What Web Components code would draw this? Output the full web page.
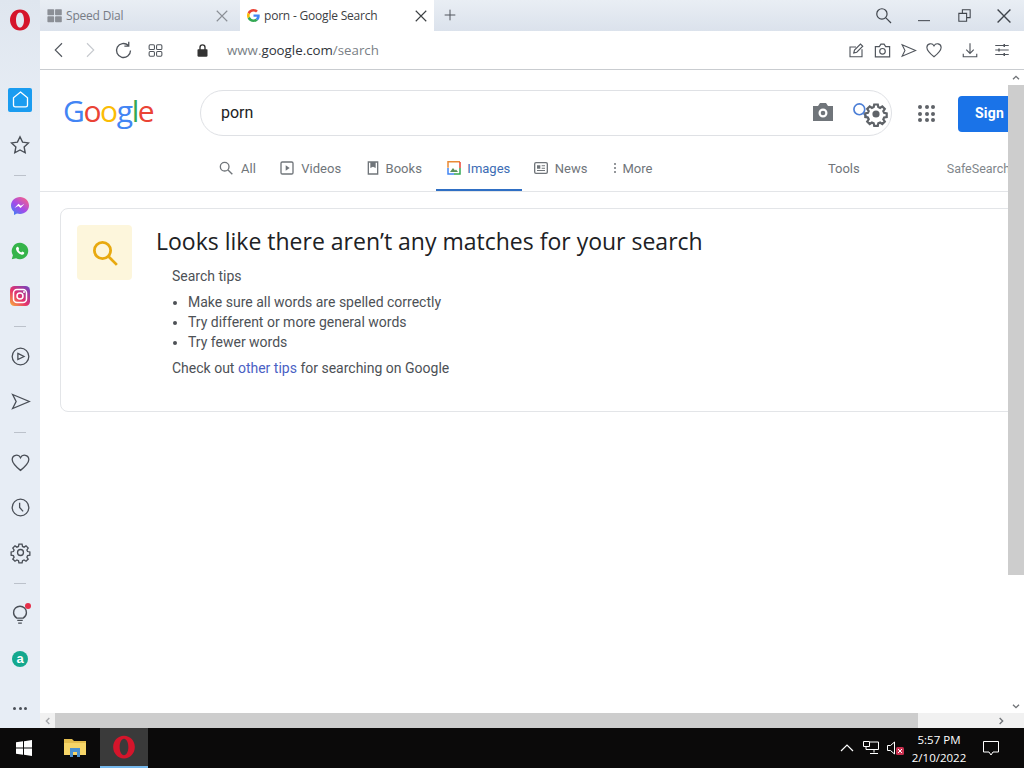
<!DOCTYPE html>
<html>
<head>
<meta charset="utf-8">
<title>porn - Google Search</title>
<style>
  html, body { margin: 0; height: 100%; overflow: hidden; background: #fff; }
  body { font-family: "Roboto", "Liberation Sans", sans-serif; }
</style>
</head>
<body>
<opera-window></opera-window>
<win-taskbar></win-taskbar>
<script>
const gLogo = `<path fill="#ea4335" d="M24 9.5c3.54 0 6.71 1.22 9.21 3.6l6.85-6.85C35.9 2.38 30.47 0 24 0 14.62 0 6.51 5.38 2.56 13.22l7.98 6.19C12.43 13.72 17.74 9.5 24 9.5z"/><path fill="#4285f4" d="M46.98 24.55c0-1.57-.15-3.09-.38-4.55H24v9.02h12.94c-.58 2.96-2.26 5.48-4.78 7.18l7.73 6c4.51-4.18 7.09-10.36 7.09-17.65z"/><path fill="#fbbc05" d="M10.53 28.59c-.48-1.45-.76-2.99-.76-4.59s.27-3.14.76-4.59l-7.98-6.19C.92 16.46 0 20.12 0 24c0 3.88.92 7.54 2.56 10.78l7.97-6.19z"/><path fill="#34a853" d="M24 48c6.48 0 11.93-2.13 15.89-5.81l-7.73-6c-2.15 1.45-4.92 2.3-8.16 2.3-6.26 0-11.57-4.22-13.47-9.91l-7.98 6.19C6.51 42.62 14.62 48 24 48z"/>`;
const gearOutline = `M10.2 2.5h3.6l.5 2.6 1.8.8 2.2-1.5 2.5 2.5-1.5 2.2.8 1.8 2.6.5v3.6l-2.6.5-.8 1.8 1.5 2.2-2.5 2.5-2.2-1.500-1.800.8-.5 2.600h-3.600l-.5-2.600-1.800-.8-2.200 1.500-2.500-2.500 1.500-2.200-.8-1.800-2.600-.5v-3.600l2.600-.5.8-1.800-1.500-2.200 2.500-2.500 2.200 1.500 1.800-.8z`;
const icons = {
  opera: `<path fill="#d5152b" stroke="none" fill-rule="evenodd" d="M12 1.500c5.800 0 10 4.700 10 10.500s-4.200 10.500-10 10.500S2 17.800 2 12 6.200 1.500 12 1.500zm0 2.900c-2.400 0-4 3.400-4 7.600s1.600 7.600 4 7.600 4-3.400 4-7.600-1.600-7.600-4-7.600z"/>`,
  dial: `<g fill="#8b8f96" stroke="none"><rect x="2" y="3" width="9.500" height="8.500" rx="1"/><rect x="12.800" y="3" width="9.500" height="8.500" rx="1"/><rect x="2" y="13" width="9.500" height="8.500" rx="1"/><rect x="12.800" y="13" width="9.500" height="8.500" rx="1"/></g>`,
  close: `<path d="M5 5l14 14M19 5L5 19"/>`,
  plus: `<path d="M12 4v16M4 12h16"/>`,
  search: `<circle cx="10" cy="10" r="6.500"/><path d="M15 15l6.500 6.500"/>`,
  minimize: `<path d="M3 19h18"/>`,
  restore: `<path d="M4 9h11v11H4zM9 9V4h11v11h-5"/>`,
  back: `<path d="M16 3l-9 9 9 9"/>`,
  forward: `<path d="M8 3l9 9-9 9"/>`,
  reload: `<path d="M20 12a8 8 0 1 1-2.600-5.900M18 2v5h-5"/>`,
  tabs: `<rect x="3" y="4" width="7.500" height="6.500" rx="1.500"/><rect x="13.500" y="4" width="7.500" height="6.500" rx="1.500"/><rect x="3" y="13.500" width="7.500" height="6.500" rx="1.500"/><rect x="13.500" y="13.500" width="7.500" height="6.500" rx="1.500"/>`,
  lock: `<path fill="#333" stroke="none" d="M5 10h14a1 1 0 0 1 1 1v9a2 2 0 0 1-2 2H6a2 2 0 0 1-2-2v-9a1 1 0 0 1 1-1z"/><path stroke="#333" stroke-width="2.200" d="M8 11V7a4 4 0 0 1 8 0v4"/>`,
  share: `<path d="M20 11v10H4V8h8"/><path d="M9 16l1-4 8-8 3 3-8 8z"/>`,
  camera: `<path d="M3 7h5l2-3h4l2 3h5v13H3z"/><circle cx="12" cy="13" r="3.500"/>`,
  send: `<path d="M3 4l19 8-19 8 4-8z"/>`,
  heart: `<path d="M12 21C6 16 2.500 12.500 2.500 8.500A5 5 0 0 1 12 6.500a5 5 0 0 1 9.500 2c0 4-3.500 7.500-9.500 12.500z"/>`,
  download: `<path d="M12 3v13M7 11.500l5 5 5-5M3 17v4h18v-4"/>`,
  easy: `<path d="M3 6h18M3 12h18M3 18h18"/><path stroke-width="2" d="M15 4v4M8 10v4M15 16v4"/>`,
  star: `<path d="M12 3l2.800 5.900 6.400.8-4.700 4.400 1.200 6.400L12 17.400l-5.700 3.100 1.200-6.400-4.700-4.400 6.400-.8z"/>`,
  home: `<path d="M12 3.500l8 6.500v8.500a2 2 0 0 1-2 2H6a2 2 0 0 1-2-2V10z"/>`,
  play: `<circle cx="12" cy="12" r="9.500"/><path d="M9 8.500l7 3.500-7 3.500z"/>`,
  clock: `<circle cx="12" cy="12" r="9.500"/><path d="M11 6.500V12l4 4.500"/>`,
  gearline: `<path d="${gearOutline}"/><circle cx="12" cy="12" r="3.400"/>`,
  gear: `<path d="${gearOutline}"/><circle cx="12" cy="12" r="3.600" fill="currentColor" stroke="none"/>`,
  bulb: `<path d="M8.500 16.500C6.500 15 5 13 5 10.500a7 7 0 0 1 14 0c0 2.500-1.500 4.500-3.500 6zM9 19h6M10 22h4"/>`,
  video: `<rect x="3" y="3" width="18" height="18" rx="2"/><path fill="#70757a" stroke="none" d="M10 8l6 4-6 4z"/>`,
  book: `<path d="M5 3h14v18H5z"/><path fill="#70757a" stroke="none" d="M8 3h8v9l-4-2-4 2z"/>`,
  news: `<rect x="2.500" y="4" width="19" height="16" rx="2"/><path fill="#70757a" stroke="none" d="M6 8h5v5H6zM13 8h5v1.500h-5zM13 11.500h5V13h-5zM6 15h12v1.500H6z"/>`
};
const iconTpl = document.createElement("template");
iconTpl.innerHTML = `
<style>
  :host { display: inline-flex; align-items: center; justify-content: center; flex: none; }
  svg { display: block; width: 100%; height: 100%; fill: none; stroke: currentColor; stroke-width: 1.5; overflow: visible; }
</style>
<svg viewBox="0 0 24 24"></svg>`;
customElements.define(
  "ui-icon",
  class extends HTMLElement {
    constructor() {
      super();
      this.attachShadow({ mode: "open" });
      this.shadowRoot.appendChild(iconTpl.content.cloneNode(true));
      const size = this.getAttribute("size") || 16;
      this.style.width = size + "px";
      this.style.height = size + "px";
      if (this.getAttribute("color")) this.style.color = this.getAttribute("color");
      const svg = this.shadowRoot.querySelector("svg");
      svg.innerHTML = icons[this.getAttribute("name")];
      if (this.getAttribute("sw")) svg.style.strokeWidth = this.getAttribute("sw");
    }
  }
);

const tabsTpl = document.createElement("template");
tabsTpl.innerHTML = `
<style>
  :host { display: flex; height: 31px; font: 12px "Open Sans", "Liberation Sans", sans-serif; letter-spacing: -.2px; }
  .tab { display: flex; align-items: center; box-sizing: border-box; width: 200px; height: 31px; padding: 0 9px 0 6px; color: #777c85; }
  .tab.active { width: 194px; background: #fff; color: #3c4043; padding: 0 4px 0 7px; }
  .label { margin-left: 3px; flex: 1; white-space: nowrap; }
  .active .label { margin-left: 4px; }
  .g { width: 13px; height: 13px; }
  .plus { margin: 0 0 2px 7.5px; align-self: center; color: #50555c; }
  .right { margin-left: auto; display: flex; align-items: center; color: #3f444b; padding-right: 9px; }
</style>
<div class="tab">
  <ui-icon name="dial" size="17"></ui-icon>
  <span class="label">Speed Dial</span>
  <ui-icon name="close" size="18" color="#8b8f96"></ui-icon>
</div>
<div class="tab active">
  <svg class="g" viewBox="0 0 48 48">${gLogo}</svg>
  <span class="label">porn - Google Search</span>
  <ui-icon name="close" size="18" color="#3c4043"></ui-icon>
</div>
<ui-icon class="plus" name="plus" size="16"></ui-icon>
<div class="right">
  <ui-icon name="search" size="19"></ui-icon>
  <ui-icon name="minimize" size="16" style="margin-left:23px"></ui-icon>
  <ui-icon name="restore" size="17" style="margin-left:23.5px"></ui-icon>
  <ui-icon name="close" size="22" style="margin-left:20.5px"></ui-icon>
</div>`;
customElements.define(
  "opera-tabs",
  class extends HTMLElement {
    constructor() {
      super();
      this.attachShadow({ mode: "open" });
      this.shadowRoot.appendChild(tabsTpl.content.cloneNode(true));
    }
  }
);

const toolbarTpl = document.createElement("template");
toolbarTpl.innerHTML = `
<style>
  :host { display: flex; align-items: center; box-sizing: border-box; height: 39px; background: #fff; border-bottom: 1px solid #c9ccd0; padding-left: 10px; color: #50555c; font: 13.3px "Open Sans", "Liberation Sans", sans-serif; }
  .url { margin-left: 17.5px; color: #7a7f86; flex: 1; }
  .url b { font-weight: 400; color: #30343a; }
  .actions { display: flex; align-items: center; padding-right: 13px; }
</style>
<ui-icon name="back" size="18"></ui-icon>
<ui-icon name="forward" size="18" color="#c6c9ce" style="margin-left:13px"></ui-icon>
<ui-icon name="reload" size="21" style="margin-left:13.5px"></ui-icon>
<ui-icon name="tabs" size="17" style="margin-left:13.5px"></ui-icon>
<ui-icon name="lock" size="15" style="margin-left:30.5px"></ui-icon>
<span class="url">www.<b>google.com</b>/search</span>
<div class="actions">
  <ui-icon name="share" size="18"></ui-icon>
  <ui-icon name="camera" size="19" style="margin-left:7.5px"></ui-icon>
  <ui-icon name="send" size="17" style="margin-left:8px"></ui-icon>
  <ui-icon name="heart" size="18" style="margin-left:8.5px"></ui-icon>
  <ui-icon name="download" size="18" style="margin-left:18px"></ui-icon>
  <ui-icon name="easy" size="18" style="margin-left:14px"></ui-icon>
</div>`;
customElements.define(
  "opera-toolbar",
  class extends HTMLElement {
    constructor() {
      super();
      this.attachShadow({ mode: "open" });
      this.shadowRoot.appendChild(toolbarTpl.content.cloneNode(true));
    }
  }
);

const sideTpl = document.createElement("template");
sideTpl.innerHTML = `
<style>
  :host { display: flex; flex-direction: column; align-items: center; width: 40px; flex: none; background: linear-gradient(#dfe6ef, #e7edf5 120px); color: #4a4f57; }
  .logo { height: 40px; display: flex; align-items: center; margin-bottom: 37px; }
  .item { height: 45px; display: flex; align-items: center; justify-content: center; position: relative; }
  .sep { height: 16px; display: flex; align-items: center; }
  .sep::after { content: ""; display: block; width: 12px; height: 1px; background: #bcc2cb; }
  .home { width: 24px; height: 24px; background: #1a9cf0; border-radius: 2px; display: flex; align-items: center; justify-content: center; color: #fff; }
  .dot { position: absolute; top: 11.5px; right: 0; width: 6px; height: 6px; border-radius: 50%; background: #e5304a; }
  .more { margin-top: auto; height: 40px; display: flex; gap: 2.5px; align-items: center; }
  .more i { width: 3px; height: 3px; border-radius: 50%; background: #4a4f57; }
  .a { width: 16px; height: 16px; border-radius: 50%; background: #14a88e; color: #fff; font: 700 13px/15px "Liberation Sans", sans-serif; text-align: center; }
</style>
<div class="logo"><ui-icon name="opera" size="24"></ui-icon></div>
<div class="item"><span class="home"><ui-icon name="home" size="21"></ui-icon></span></div>
<div class="item"><ui-icon name="star" size="22"></ui-icon></div>
<div class="sep"></div>
<div class="item">
  <svg width="20" height="20" viewBox="0 0 20 20">
    <defs><linearGradient id="ms" x1="0" y1="1" x2="0.8" y2="0"><stop offset="0" stop-color="#2f8bf5"/><stop offset=".5" stop-color="#a24bea"/><stop offset="1" stop-color="#f6608a"/></linearGradient></defs>
    <path fill="url(#ms)" d="M10 1c5 0 9 3.700 9 8.500S15 18 10 18l-3-.4L4 19v-3.200C2.200 14.300 1 12 1 9.500 1 4.700 5 1 10 1z"/>
    <path fill="#fff" d="M4.500 12l4-4.300 2.300 2 3.700-2-3.900 4.300-2.300-2z"/>
  </svg>
</div>
<div class="item">
  <svg width="18" height="18" viewBox="0 0 18 18">
    <path fill="#35b44a" d="M9 .8a8.200 8.200 0 1 1-3.900 15.400L.8 17.200l1.100-4A8.200 8.200 0 0 1 9 .8z"/>
    <path fill="#fff" d="M6.300 4.800l1 .1.900 2-.7 1c.6 1.200 1.500 2 2.700 2.600l1-.9 2 1-.1 1.100c-.6 1-1.800 1.300-3 .9-2.500-.9-4.300-2.700-5-5-.3-1.100.2-2.200 1.200-2.800z"/>
  </svg>
</div>
<div class="item">
  <svg width="20" height="20" viewBox="0 0 20 20">
    <defs><linearGradient id="ig" x1="0" y1="1" x2="1" y2="0"><stop offset="0" stop-color="#f9b23a"/><stop offset=".45" stop-color="#e5316c"/><stop offset="1" stop-color="#6a45c6"/></linearGradient></defs>
    <rect width="20" height="20" rx="4.500" fill="url(#ig)"/>
    <rect x="3.500" y="3.500" width="13" height="13" rx="3.500" fill="none" stroke="#fff" stroke-width="1.500"/>
    <circle cx="10" cy="10" r="3" fill="none" stroke="#fff" stroke-width="1.500"/>
    <circle cx="14" cy="6" r="1" fill="#fff"/>
  </svg>
</div>
<div class="sep"></div>
<div class="item"><ui-icon name="play" size="21"></ui-icon></div>
<div class="item"><ui-icon name="send" size="21"></ui-icon></div>
<div class="sep"></div>
<div class="item"><ui-icon name="heart" size="21"></ui-icon></div>
<div class="item"><ui-icon name="clock" size="21"></ui-icon></div>
<div class="item"><ui-icon name="gearline" size="21"></ui-icon></div>
<div class="sep"></div>
<div class="item"><ui-icon name="bulb" size="22"></ui-icon><span class="dot"></span></div>
<div class="item"><span class="a">a</span></div>
<div class="more"><i></i><i></i><i></i></div>`;
customElements.define(
  "opera-sidebar",
  class extends HTMLElement {
    constructor() {
      super();
      this.attachShadow({ mode: "open" });
      this.shadowRoot.appendChild(sideTpl.content.cloneNode(true));
    }
  }
);

const headTpl = document.createElement("template");
headTpl.innerHTML = `
<style>
  :host { display: block; box-sizing: border-box; height: 122px; border-bottom: 1px solid #e3e5e8; color: #70757a; font-family: Roboto, "Liberation Sans", sans-serif; overflow: hidden; }
  .top { display: flex; align-items: flex-start; padding: 20px 0 0 23px; height: 46px; width: 1000px; }
  .logo { width: 137px; flex: none; font: 500 30px/42px "Open Sans", "Liberation Sans", sans-serif; letter-spacing: -1.4px; white-space: nowrap; }
  .box { box-sizing: border-box; width: 692px; height: 46px; flex: none; border: 1px solid #dfe1e5; border-radius: 23px; display: flex; align-items: center; padding: 0 0 2px 20px; position: relative; color: #202124; font-size: 16px; }
  .q { flex: 1; }
  .cam { position: absolute; left: 610px; top: 9px; }
  .lens { position: absolute; left: 650px; top: 10px; color: #4d7fd6; }
  .gear { position: absolute; left: 663px; top: 11px; color: #5f6368; }
  .apps { display: grid; grid-template-columns: repeat(3, 4px); gap: 2.500px; margin: 15px 0 0 26px; flex: none; }
  .apps i { width: 4px; height: 4px; border-radius: 50%; background: #5f6368; }
  .sign { flex: none; margin: 6px 0 0 23px; width: 90px; height: 36px; border-radius: 4px; background: #1a73e8; color: #fff; font: 700 14px/35px Roboto, sans-serif; letter-spacing: .2px; padding-left: 17px; box-sizing: border-box; }
  nav { display: flex; margin: 13px 0 0 168px; height: 43px; font-size: 13px; white-space: nowrap; width: 900px; }
  .n { display: flex; align-items: center; box-sizing: border-box; height: 43px; padding: 0 12px 2px; margin-right: 1.500px; border-bottom: 3px solid transparent; }
  .n ui-icon { margin: 0 6px 0 -2px; }
  .n.on { color: #3c6cb4; border-color: #2f6fc4; padding: 0 12px 2px 11px; }
  .dots { display: flex; flex-direction: column; gap: 1.500px; margin: 0 6px 0 1px; }
  .dots i { width: 2.500px; height: 2.500px; background: #70757a; border-radius: 50%; }
  .t { display: flex; align-items: center; height: 38px; }
</style>
<div class="top">
  <div class="logo"><span style="color:#4285f4">G</span><span style="color:#ea4335">o</span><span style="color:#fbbc05">o</span><span style="color:#4285f4">g</span><span style="color:#34a853">l</span><span style="color:#ea4335">e</span></div>
  <div class="box">
    <span class="q">porn</span>
    <svg class="cam" width="24" height="24" viewBox="0 0 24 24"><path fill="#70757a" fill-rule="evenodd" d="M2 6h5l2-3h6l2 3h5v15H2zM12 8.500a4.500 4.500 0 1 0 0 9 4.500 4.500 0 0 0 0-9zm0 2.200a2.300 2.300 0 1 1 0 4.600 2.300 2.300 0 0 1 0-4.600z"/></svg>
    <ui-icon class="lens" name="search" size="20" sw="2"></ui-icon>
    <ui-icon class="gear" name="gear" size="24" sw="2.200"></ui-icon>
  </div>
  <div class="apps"><i></i><i></i><i></i><i></i><i></i><i></i><i></i><i></i><i></i></div>
  <div class="sign">Sign</div>
</div>
<nav>
  <div class="n"><ui-icon name="search" size="16" sw="2" style="margin-right:7px"></ui-icon>All</div>
  <div class="n"><ui-icon name="video" size="16" sw="2"></ui-icon>Videos</div>
  <div class="n" style="margin-right:2.500px"><ui-icon name="book" size="16" sw="2" style="margin-right:5px"></ui-icon>Books</div>
  <div class="n on" style="margin-right:.5px">
    <svg width="14" height="14" viewBox="0 0 14 14" style="margin-right:6px">
      <path fill="none" stroke="#ea8a35" stroke-width="1.500" d="M13 .8H1v6"/><path fill="none" stroke="#4285f4" stroke-width="1.500" d="M1 7v6h6"/><path fill="none" stroke="#34a853" stroke-width="1.500" d="M7 13h6V7"/><path fill="none" stroke="#ea4335" stroke-width="1.500" d="M13 7V1"/>
      <path fill="#5a8f5a" d="M3 11l3-4 2 2.500 1-1 2 2.500z"/>
    </svg>Images
  </div>
  <div class="n"><ui-icon name="news" size="16" sw="2"></ui-icon>News</div>
  <div class="n"><span class="dots"><i></i><i></i><i></i></span>More</div>
  <div class="t" style="margin-left:162px">Tools</div>
  <div class="t" style="margin-left:87px;color:#80868b;font-size:12.500px">SafeSearch</div>
</nav>`;
customElements.define(
  "google-header",
  class extends HTMLElement {
    constructor() {
      super();
      this.attachShadow({ mode: "open" });
      this.shadowRoot.appendChild(headTpl.content.cloneNode(true));
    }
  }
);

const cardTpl = document.createElement("template");
cardTpl.innerHTML = `
<style>
  :host { display: flex; box-sizing: border-box; width: 1000px; height: 204px; margin: 16px 0 0 20px; padding: 16px; border: 1px solid #e3e5e8; border-radius: 8px; color: #4d5156; font: 14px/20px Roboto, "Liberation Sans", sans-serif; }
  .ico { width: 55px; height: 55px; flex: none; background: #fdf6dc; border-radius: 4px; display: flex; align-items: center; justify-content: center; }
  .body { margin-left: 24px; }
  h1 { margin: 0; font: 400 23px/32px "Open Sans", Roboto, sans-serif; color: #202124; white-space: nowrap; }
  .tips { margin-left: 16px; }
  p { margin: 0; }
  ul { margin: 6px 0; padding: 0 0 0 16px; }
  li { height: 20px; padding-left: 0; }
  a { color: #4a61c4; text-decoration: none; }
</style>
<div class="ico"><ui-icon name="search" size="30" sw="2.200" color="#e8a90f"></ui-icon></div>
<div class="body">
  <h1>Looks like there aren’t any matches for your search</h1>
  <div class="tips" style="margin-top:9px">
    <p>Search tips</p>
    <ul>
      <li>Make sure all words are spelled correctly</li>
      <li>Try different or more general words</li>
      <li>Try fewer words</li>
    </ul>
    <p>Check out <a>other tips</a> for searching on Google</p>
  </div>
</div>`;
customElements.define(
  "no-results",
  class extends HTMLElement {
    constructor() {
      super();
      this.attachShadow({ mode: "open" });
      this.shadowRoot.appendChild(cardTpl.content.cloneNode(true));
    }
  }
);

const barsTpl = document.createElement("template");
barsTpl.innerHTML = `
<style>
  :host { display: grid; grid-template-columns: 1fr 16px; grid-template-rows: 1fr 15px; height: 100%; min-height: 0; }
  .view { overflow: hidden; min-width: 0; background: #fff; }
  .v { display: flex; flex-direction: column; align-items: center; background: #fff; }
  .h { display: flex; align-items: center; background: #f1f1f1; }
  .thumb { background: #cdcdcd; }
  .v .thumb { width: 16px; height: 490px; }
  .h .thumb { height: 15px; width: 863px; }
  .arrow { width: 15px; height: 15px; display: flex; align-items: center; justify-content: center; flex: none; color: #6f7276; }
  .corner { background: #f1f1f1; }
  .sp { flex: 1; }
</style>
<div class="view"><slot></slot></div>
<div class="v">
  <div class="arrow"><ui-icon name="back" size="8" sw="4" style="transform:rotate(90deg)"></ui-icon></div>
  <div class="thumb"></div>
  <div class="sp"></div>
  <div class="arrow"><ui-icon name="forward" size="8" sw="4" style="transform:rotate(90deg)"></ui-icon></div>
</div>
<div class="h">
  <div class="arrow"><ui-icon name="back" size="8" sw="4" color="#a3a5a8"></ui-icon></div>
  <div class="thumb"></div>
  <div class="sp"></div>
  <div class="arrow"><ui-icon name="forward" size="8" sw="4"></ui-icon></div>
</div>
<div class="corner"></div>`;
customElements.define(
  "scroll-view",
  class extends HTMLElement {
    constructor() {
      super();
      this.attachShadow({ mode: "open" });
      this.shadowRoot.appendChild(barsTpl.content.cloneNode(true));
    }
  }
);

const winTpl = document.createElement("template");
winTpl.innerHTML = `
<style>
  :host { display: flex; height: 728px; background: #e7edf5; }
  .main { flex: 1; min-width: 0; display: flex; flex-direction: column; }
  .pane { flex: 1; min-height: 0; }
  opera-tabs { background: linear-gradient(#e9eef4, #dbe2ec); }
</style>
<opera-sidebar></opera-sidebar>
<div class="main">
  <opera-tabs></opera-tabs>
  <opera-toolbar></opera-toolbar>
  <div class="pane">
    <scroll-view>
      <google-header></google-header>
      <no-results></no-results>
    </scroll-view>
  </div>
</div>`;
customElements.define(
  "opera-window",
  class extends HTMLElement {
    constructor() {
      super();
      this.attachShadow({ mode: "open" });
      this.shadowRoot.appendChild(winTpl.content.cloneNode(true));
    }
  }
);

const taskTpl = document.createElement("template");
taskTpl.innerHTML = `
<style>
  :host { display: flex; align-items: center; height: 40px; background: #0b0a0a; color: #fff; font: 11.5px "Open Sans", "Liberation Sans", sans-serif; }
  .win { margin-left: 16px; width: 16px; height: 16px; }
  .folder { margin-left: 32px; }
  .opera { margin-left: 14px; box-sizing: border-box; width: 48px; height: 40px; background: #3a3a3a; border-bottom: 2px solid #76b9ed; display: flex; align-items: center; justify-content: center; }
  .tray { margin-left: auto; display: flex; align-items: center; height: 40px; }
  .clock { text-align: center; width: 76px; margin: 1px 0 0 3px; line-height: 18px; }
  .note { margin: 0 25px 0 6px; }
</style>
<svg class="win" viewBox="0 0 16 16"><path fill="#fff" d="M0 2.300l7-1v6.200H0zM8 1.200L16 0v7.500H8zM0 8.500h7v6.200l-7-1zM8 8.500h8V16l-8-1.200z"/></svg>
<svg class="folder" width="22" height="18" viewBox="0 0 22 18">
  <path fill="#e4bd4e" d="M0 0h8l2 2h12v14H0z"/><path fill="#f6d568" d="M0 4h22v12H0z"/><path fill="#4a90d0" d="M6 9h10v9h-3v-5H9v5H6z"/>
</svg>
<div class="opera"><ui-icon name="opera" size="26"></ui-icon></div>
<div class="tray">
  <svg width="14" height="8" viewBox="0 0 14 8"><path fill="none" stroke="#fff" stroke-width="1.200" d="M1 7l6-6 6 6"/></svg>
  <svg width="16" height="14" viewBox="0 0 16 14" style="margin-left:9px"><path fill="none" stroke="#fff" d="M.5.500h6v5h-6zM3 5.500v3h12.500V1H7M11 8.500v3M7 12.500h8"/></svg>
  <span style="position:relative;margin-left:8px;display:flex">
    <svg width="11" height="14" viewBox="0 0 11 14"><path fill="none" stroke="#fff" d="M.5 4.500h3l4-3.500v12l-4-3.500h-3z"/></svg>
    <svg width="8" height="8" viewBox="0 0 8 8" style="position:absolute;left:9px;top:6px"><rect width="8" height="8" rx="1.500" fill="#c9304f"/><path stroke="#fff" d="M2 2l4 4M6 2L2 6"/></svg>
  </span>
  <div class="clock"><div>5:57 PM</div><div>2/10/2022</div></div>
  <svg class="note" width="16" height="15" viewBox="0 0 16 15"><path fill="none" stroke="#fff" d="M.5.500h15v10.500H10l-2 3-2-3H.5z"/></svg>
</div>`;
customElements.define(
  "win-taskbar",
  class extends HTMLElement {
    constructor() {
      super();
      this.attachShadow({ mode: "open" });
      this.shadowRoot.appendChild(taskTpl.content.cloneNode(true));
    }
  }
);
</script>
</body>
</html>
